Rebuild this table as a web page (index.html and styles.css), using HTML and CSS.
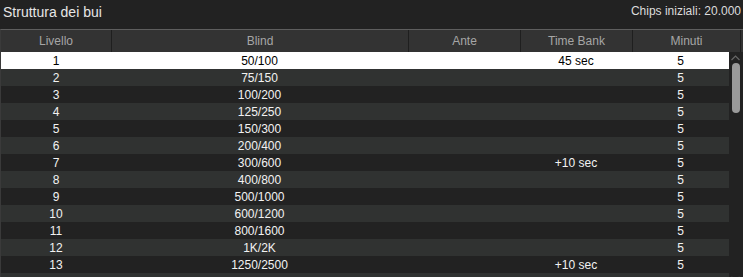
FILE: index.html
```
<!DOCTYPE html>
<html>
<head>
<meta charset="utf-8">
<link rel="stylesheet" href="styles.css">
</head>
<body>
<div class="titlebar">
  <span class="title">Struttura dei bui</span>
  <span class="chips">Chips iniziali: 20.000</span>
</div>
<div class="table">
  <div class="head">
    <div class="hc">Livello</div>
    <div class="hc">Blind</div>
    <div class="hc">Ante</div>
    <div class="hc">Time Bank</div>
    <div class="hc">Minuti</div>
  </div>
  <div class="bodywrap">
    <div class="rows">
      <div class="row sel"><div>1</div><div>50/100</div><div></div><div>45 sec</div><div>5</div></div>
      <div class="row"><div>2</div><div>75/150</div><div></div><div></div><div>5</div></div>
      <div class="row"><div>3</div><div>100/200</div><div></div><div></div><div>5</div></div>
      <div class="row"><div>4</div><div>125/250</div><div></div><div></div><div>5</div></div>
      <div class="row"><div>5</div><div>150/300</div><div></div><div></div><div>5</div></div>
      <div class="row"><div>6</div><div>200/400</div><div></div><div></div><div>5</div></div>
      <div class="row"><div>7</div><div>300/600</div><div></div><div>+10 sec</div><div>5</div></div>
      <div class="row"><div>8</div><div>400/800</div><div></div><div></div><div>5</div></div>
      <div class="row"><div>9</div><div>500/1000</div><div></div><div></div><div>5</div></div>
      <div class="row"><div>10</div><div>600/1200</div><div></div><div></div><div>5</div></div>
      <div class="row"><div>11</div><div>800/1600</div><div></div><div></div><div>5</div></div>
      <div class="row"><div>12</div><div>1K/2K</div><div></div><div></div><div>5</div></div>
      <div class="row"><div>13</div><div>1250/2500</div><div></div><div>+10 sec</div><div>5</div></div>
      <div class="row"><div></div><div></div><div></div><div></div><div></div></div>
    </div>
    <div class="scrollbar">
      <svg class="arrow" width="9" height="6" viewBox="0 0 9 6"><path d="M0.5 5 L4.5 1 L8.5 5" fill="none" stroke="#666" stroke-width="1.2"/></svg>
      <div class="thumb"></div>
      <div class="spacer"></div>
      <svg class="arrow" width="9" height="6" viewBox="0 0 9 6"><path d="M0.5 1 L4.5 5 L8.5 1" fill="none" stroke="#666" stroke-width="1.2"/></svg>
    </div>
  </div>
</div>
</body>
</html>
```
FILE: styles.css
```
html, body {
  margin: 0;
  padding: 0;
  background: #222222;
  overflow: hidden;
  font-family: "Liberation Sans", Arial, sans-serif;
}
.titlebar {
  height: 29px;
  display: flex;
  justify-content: space-between;
  align-items: flex-start;
  padding: 0 2px 0 3px;
}
.title {
  color: #e6e6e6;
  font-size: 14px;
  line-height: 24px;
}
.chips {
  color: #dcdcdc;
  font-size: 12px;
  line-height: 22px;
}
.table {
  border-top: 1px solid #5e5e5e;
  border-left: 1px solid #3a3a3a;
}
.head {
  display: grid;
  grid-template-columns: 110px 297px 112px 112px 109px;
  height: 22px;
  background: #333333;
}
.hc {
  color: #a6a6a6;
  font-size: 12px;
  line-height: 22px;
  text-align: center;
  border-left: 1px solid #1f1f1f;
}
.hc:first-child { border-left: none; }
.hc:last-child { border-right: 1px solid #1f1f1f; }
.bodywrap {
  display: flex;
  height: 230px;
  overflow: hidden;
}
.rows {
  width: 728px;
  flex: none;
}
.row {
  display: grid;
  grid-template-columns: 110px 297px 112px 112px 97px;
  height: 17px;
  font-size: 12px;
  line-height: 18px;
  color: #f2f2f2;
  text-align: center;
  background: #222222;
}
.row:nth-child(even) { background: #303231; }
.row.sel { background: #ffffff; color: #000000; }
.scrollbar {
  width: 13px;
  display: flex;
  flex-direction: column;
  align-items: center;
  padding-top: 3px;
}
.arrow { flex: none; }
.thumb {
  width: 8px;
  height: 50px;
  margin-top: 2px;
  border-radius: 4px;
  background: #9a9a9a;
}
.spacer { flex: 1; }
```
